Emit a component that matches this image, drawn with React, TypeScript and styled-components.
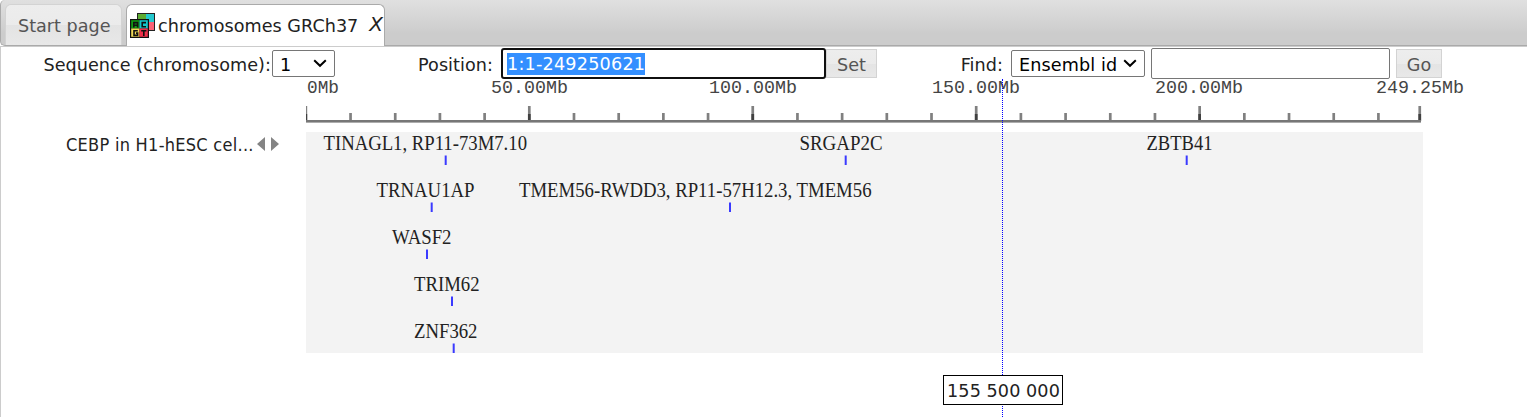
import React from "react";
import styled, { createGlobalStyle } from "styled-components";

const GlobalStyle = createGlobalStyle`
  * { box-sizing: border-box; }
  body {
    margin: 0;
    background: #fff;
    color: #222;
    font-family: "DejaVu Sans", Verdana, sans-serif;
    font-size: 17.6px;
    overflow: hidden;
  }
`;

const Page = styled.div`
  position: relative;
  width: 1527px;
  height: 417px;
  overflow: hidden;
`;

const TabBar = styled.div`
  display: flex;
  align-items: flex-end;
  gap: 4px;
  height: 46px;
  padding-left: 4px;
  border: 1px solid #aaa;
  border-top: 0;
  border-right: 0;
  border-radius: 5px 0 0 5px;
  background: linear-gradient(#e0e0e0, #cccccc 75%, #cccccc);
`;

const Tab = styled.div<{ $width: number; $active?: boolean }>`
  display: flex;
  align-items: center;
  width: ${(p) => p.$width}px;
  height: ${(p) => (p.$active ? 42 : 41)}px;
  margin-bottom: ${(p) => (p.$active ? -1 : 0)}px;
  padding: 0 0 0 ${(p) => (p.$active ? 3 : 12)}px;
  border: 1px solid ${(p) => (p.$active ? "#aaa" : "#d3d3d3")};
  border-bottom: 0;
  border-radius: 6px 6px 0 0;
  color: ${(p) => (p.$active ? "#212121" : "#555")};
  background: ${(p) =>
    p.$active ? "#fff" : "linear-gradient(#ededed 0%, #ebebeb 50%, #e3e3e3 51%, #e8e8e8 100%)"};
`;

const Text = styled.span<{ $spacing?: number }>`
  white-space: pre;
  line-height: 24px;
  padding-top: 1px;
  letter-spacing: ${(p) => p.$spacing ?? 0}px;
`;

const CloseMark = styled.span`
  margin-left: 11px;
  padding-bottom: 3px;
  font-style: italic;
  font-size: 20px;
  line-height: 24px;
`;

const SequenceIcon = styled.svg`
  flex: none;
  margin: -1px 2px 1px 0;
`;

const Content = styled.main`
  height: 371px;
  border-top: 1px solid #ccc;
  border-left: 1px solid #ccc;
`;

const Toolbar = styled.div`
  display: flex;
  align-items: center;
  height: 33px;
`;

const FieldLabel = styled.label<{ $width: number; $gap?: number }>`
  width: ${(p) => p.$width}px;
  margin-right: ${(p) => p.$gap ?? 0}px;
  padding-top: 2px;
  text-align: right;
  white-space: nowrap;
  line-height: 24px;
  letter-spacing: 0.06px;
`;

const Select = styled.div<{ $width: number }>`
  display: flex;
  align-items: center;
  justify-content: space-between;
  width: ${(p) => p.$width}px;
  height: 27px;
  padding: 0 7px;
  border: 1px solid #767676;
  border-radius: 2px;
  background: #fff;
  color: #000;

  ${Text} {
    padding-top: 2px;
  }
`;

const Field = styled.div<{ $width: number; $focused?: boolean }>`
  display: flex;
  align-items: center;
  width: ${(p) => p.$width}px;
  height: 31px;
  padding: 0 4px;
  border: ${(p) => (p.$focused ? "2px solid #101010" : "1px solid #767676")};
  border-radius: ${(p) => (p.$focused ? 3 : 2)}px;
  background: #fff;
`;

const Selection = styled.span`
  height: 22px;
  line-height: 23px;
  background: #338fff;
  color: #fff;
  letter-spacing: 0.22px;
`;

const Button = styled.button<{ $width: number }>`
  width: ${(p) => p.$width}px;
  height: 29px;
  padding: 2px 0 0;
  border: 1px solid #d3d3d3;
  background: linear-gradient(#ededed 0%, #ebebeb 50%, #e4e4e4 51%, #e8e8e8 100%);
  color: #555;
  font: inherit;
`;

const Spacer = styled.span<{ $width: number }>`
  flex: none;
  width: ${(p) => p.$width}px;
`;

const Browser = styled.div`
  display: flex;
  height: 337px;
`;

const TrackNames = styled.div`
  width: 305px;
  padding: 52px 0 0 65px;
`;

const TrackName = styled.div`
  display: flex;
  align-items: center;
  gap: 3px;
  height: 24px;
  font-family: "DejaVu Sans Condensed", "DejaVu Sans", Tahoma, sans-serif;
  font-size: 18px;
`;

const Chart = styled.svg`
  display: block;
  margin-top: -1px;
  overflow: visible;
`;

const Cursor = styled.div`
  position: absolute;
  top: 79px;
  left: 1002px;
  height: 338px;
  border-left: 1px dotted #0000ff;
`;

const CursorValue = styled.div`
  position: absolute;
  top: 375px;
  left: 943px;
  width: 120px;
  height: 30px;
  padding-left: 1px;
  border: 1px solid #000;
  background: #fff;
  text-align: center;
  line-height: 31px;
  letter-spacing: 0.08px;
  white-space: nowrap;
`;

const PX_PER_MB = 4.469;
const LAST_MB = 249.25;

const scaleLabels = [
  { text: "0Mb", x: 1, width: 32 },
  { text: "50.00Mb", x: 185, width: 77 },
  { text: "100.00Mb", x: 403, width: 88 },
  { text: "150.00Mb", x: 626, width: 88 },
  { text: "200.00Mb", x: 849, width: 88 },
  { text: "249.25Mb", x: 1070, width: 88 },
];

const genes = [
  { name: "TINAGL1, RP11-73M7.10", x: 17.5, width: 203.5, site: 139.2, row: 0 },
  { name: "SRGAP2C", x: 493.5, width: 83, site: 539.2, row: 0 },
  { name: "ZBTB41", x: 840.5, width: 66, site: 880.2, row: 0 },
  { name: "TRNAU1AP", x: 70.5, width: 98, site: 125.2, row: 1 },
  { name: "TMEM56-RWDD3, RP11-57H12.3, TMEM56", x: 213, width: 352.5, site: 423.5, row: 1 },
  { name: "WASF2", x: 86, width: 59.5, site: 120.5, row: 2 },
  { name: "TRIM62", x: 108, width: 65.5, site: 145.5, row: 3 },
  { name: "ZNF362", x: 108, width: 63.5, site: 147.2, row: 4 },
];

const ticks = Array.from({ length: 25 }, (_, i) => i * 10).concat(LAST_MB);

const Chevron = () => (
  <svg width="14" height="9" viewBox="0 0 14 9">
    <path d="M1.2 1.2 L7 6.8 L12.8 1.2" fill="none" stroke="#000" strokeWidth="2" />
  </svg>
);

const ChromosomeIcon = () => (
  <SequenceIcon width="26" height="26" viewBox="0 0 26 26">
    <rect x="7" y="1" width="18" height="18" fill="#222" />
    <path d="M8 2h8v8H8z" fill="#5dac32" />
    <path d="M16 2h8v8h-8z" fill="#24c8ce" />
    <path d="M16 10h8v8h-8z" fill="#fb6175" />
    <rect x="0" y="7" width="19" height="19" fill="#111" />
    <path d="M1.2 8.2h8.3v8.3H1.2z" fill="#129812" />
    <path d="M9.5 8.2h8.3v8.3H9.5z" fill="#13c7cb" />
    <path d="M1.2 16.5h8.3v8.3H1.2z" fill="#f0d957" />
    <path d="M9.5 16.5h8.3v8.3H9.5z" fill="#ef304b" />
    <g fill="none" stroke="#111" strokeWidth="1.6">
      <path d="M3.8 15.6v-5h3.8v5M4 13.2h3.6" />
      <path d="M16 10.6h-3.8v4.2H16" />
      <path d="M7.8 18.8H4v4.6h3.6v-2.3H6" />
      <path d="M11.2 18.8h5.2M13.8 18.8v5.2" />
    </g>
  </SequenceIcon>
);

export default function App() {
  return (
    <>
      <GlobalStyle />
      <Page>
        <TabBar>
          <Tab $width={117}>
            <Text>Start page</Text>
          </Tab>
          <Tab $width={259} $active>
            <ChromosomeIcon />
            <Text $spacing={0.03}>chromosomes GRCh37</Text>
            <CloseMark>X</CloseMark>
          </Tab>
        </TabBar>
        <Content>
          <Toolbar>
            <FieldLabel $width={270} $gap={1}>Sequence (chromosome):</FieldLabel>
            <Select $width={63}>
              <Text>1</Text>
              <Chevron />
            </Select>
            <FieldLabel $width={158} $gap={8}>Position:</FieldLabel>
            <Field $width={325} $focused>
              <Selection>1:1-249250621</Selection>
            </Field>
            <Button $width={51}>Set</Button>
            <FieldLabel $width={126} $gap={8}>Find:</FieldLabel>
            <Select $width={134}>
              <Text $spacing={0.12}>Ensembl id</Text>
              <Chevron />
            </Select>
            <Spacer $width={6} />
            <Field $width={239} />
            <Spacer $width={6} />
            <Button $width={46}>Go</Button>
          </Toolbar>
          <Browser>
            <TrackNames>
              <TrackName>
                <Text $spacing={0.27}>CEBP in H1-hESC cel...</Text>
                <svg width="22" height="14" viewBox="0 0 22 14">
                  <path d="M8 0v14L0 7zM14 0v14l8-7z" fill="#848484" />
                </svg>
              </TrackName>
            </TrackNames>
            <Chart width="1117" height="274" viewBox="0 0 1117 274">
              <g fontFamily='"Liberation Mono", monospace' fontSize="18" fill="#444">
                {scaleLabels.map((l) => (
                  <text key={l.text} x={l.x} y="13.5" textLength={l.width} lengthAdjust="spacingAndGlyphs">
                    {l.text}
                  </text>
                ))}
              </g>
              {ticks.map((mb) => {
                const major = mb % 50 === 0 || mb === LAST_MB;
                const x = Math.max(0, mb * PX_PER_MB - 1.5);
                return (
                  <g key={mb}>
                    <rect x={x} y={major ? 27 : 34} width={mb === 0 ? 1.2 : 2.7} height={major ? 15 : 8} fill="#808080" />
                    {major && <rect x={x} y="35" width={mb === 0 ? 1.2 : 2.7} height="7" fill="#404040" />}
                  </g>
                );
              })}
              <rect x="0" y="41" width="1115" height="2.6" fill="#777" />
              <rect x="0" y="53" width="1117" height="221" fill="#f3f3f3" />
              <g fontFamily='"Liberation Serif", serif' fontSize="20" fill="#222">
                {genes.map((g) => (
                  <React.Fragment key={g.name}>
                    <text x={g.x} y={70.5 + g.row * 47} textLength={g.width} lengthAdjust="spacingAndGlyphs">
                      {g.name}
                    </text>
                    <rect x={g.site - 0.5} y={76.5 + g.row * 47} width="2" height="9.5" fill="#3a3aff" />
                  </React.Fragment>
                ))}
              </g>
            </Chart>
          </Browser>
        </Content>
        <Cursor />
        <CursorValue>155 500 000</CursorValue>
      </Page>
    </>
  );
}
